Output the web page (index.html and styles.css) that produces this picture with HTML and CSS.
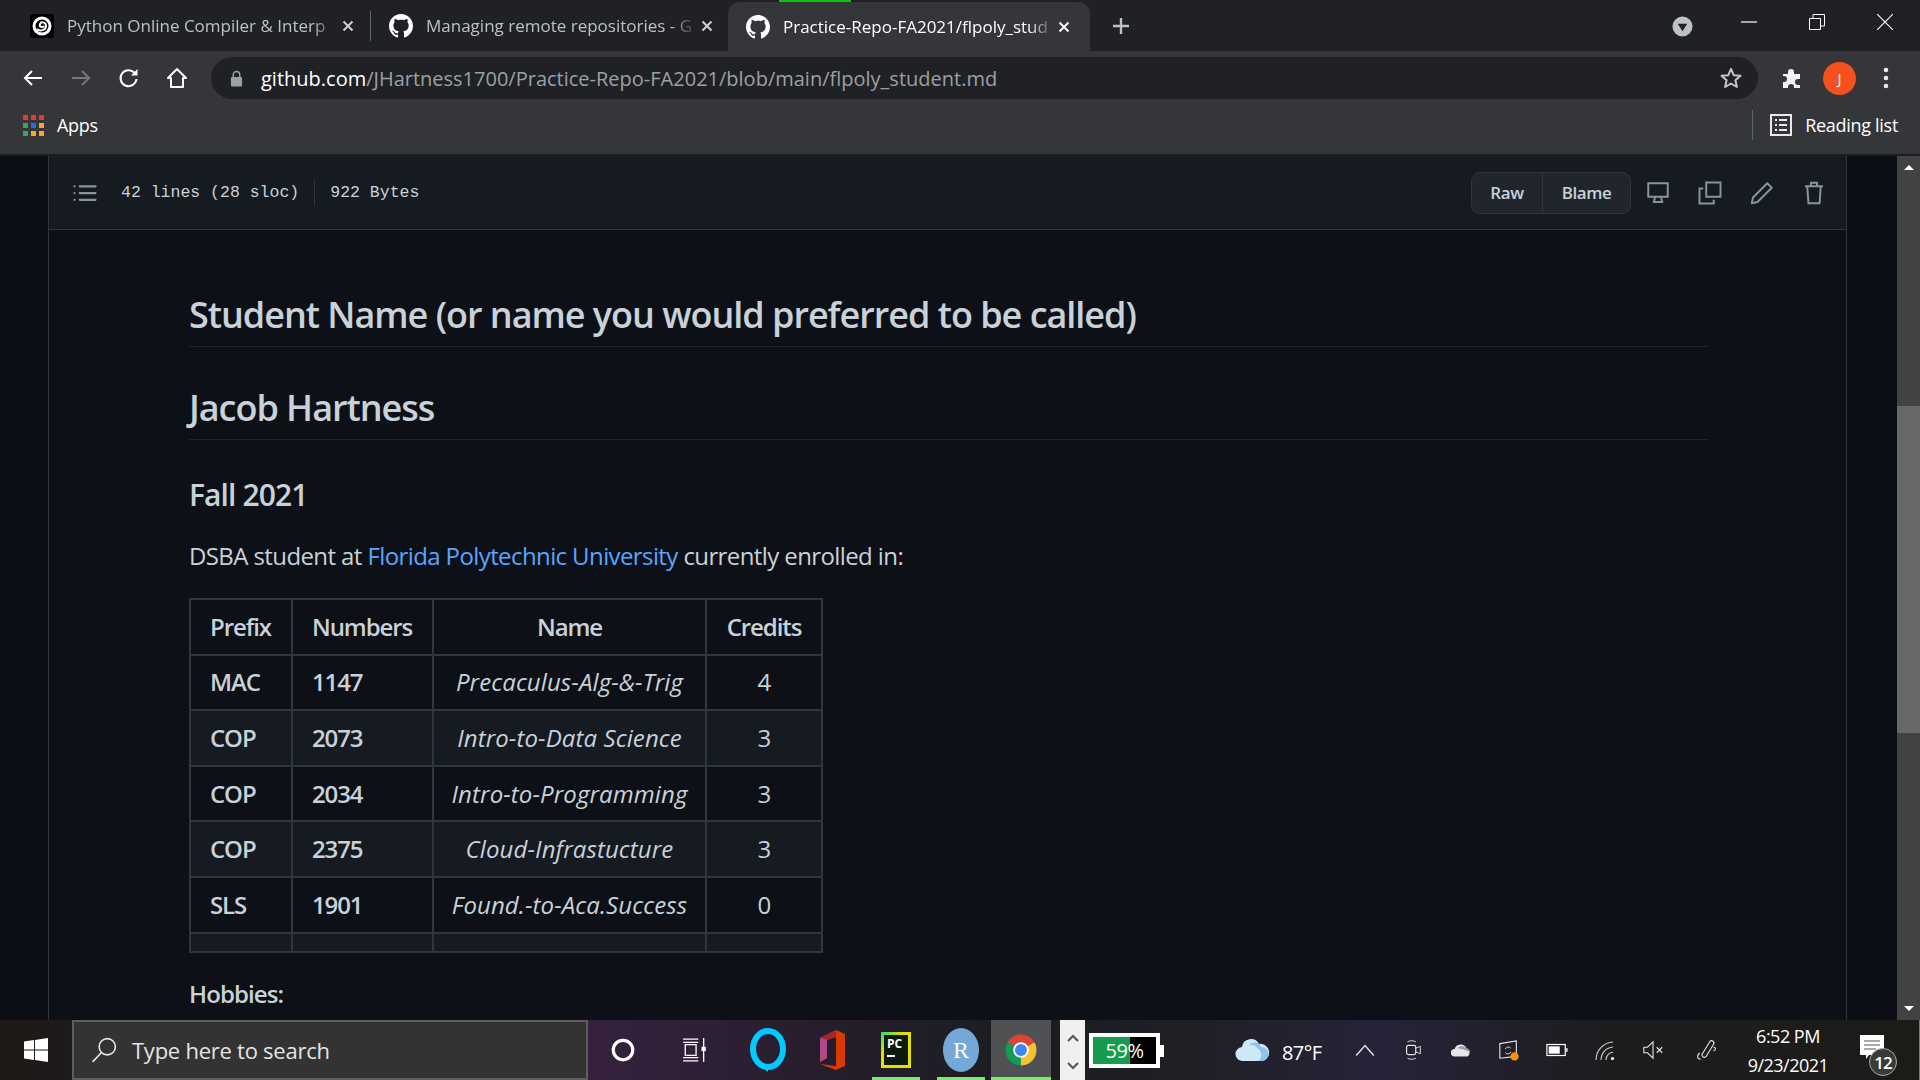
FILE: index.html
```html
<!DOCTYPE html>
<html lang="en">
<head>
<meta charset="UTF-8" />
<title>Practice-Repo-FA2021/flpoly_student.md</title>
<link rel="stylesheet" href="styles.css">
</head>
<body>
<svg class="defs">
    <symbol id="gh" viewBox="0 0 16 16"><path fill="#fff" d="M8 0C3.58 0 0 3.58 0 8c0 3.54 2.29 6.53 5.47 7.59.4.07.55-.17.55-.38 0-.19-.01-.82-.01-1.49-2.01.37-2.53-.49-2.69-.94-.09-.23-.48-.94-.82-1.13-.28-.15-.68-.52-.01-.53.63-.01 1.08.58 1.23.82.72 1.21 1.87.87 2.33.66.07-.52.28-.87.51-1.07-1.78-.2-3.64-.89-3.64-3.95 0-.87.31-1.59.82-2.15-.08-.2-.36-1.02.08-2.12 0 0 .67-.21 2.2.82.64-.18 1.32-.27 2-.27.68 0 1.36.09 2 .27 1.53-1.04 2.2-.82 2.2-.82.44 1.1.16 1.92.08 2.12.51.56.82 1.27.82 2.15 0 3.07-1.87 3.75-3.65 3.95.29.25.54.73.54 1.48 0 1.07-.01 1.93-.01 2.2 0 .21.15.46.55.38A8.013 8.013 0 0016 8c0-4.42-3.58-8-8-8z"/></symbol>
    <symbol id="x" viewBox="0 0 12 12"><path d="M1.5 1.5l9 9M10.5 1.5l-9 9" stroke="currentColor" stroke-width="2" fill="none"/></symbol>
</svg>

<!-- tab strip -->
<div class="tabstrip">
    <div class="loadbar"></div>
    <div class="tab tab-first">
        <svg class="favicon" viewBox="0 0 24 24"><rect width="24" height="24" rx="3" fill="#000"/><circle cx="12" cy="12" r="8" fill="none" stroke="#fff" stroke-width="3"/><path d="M7 15c3 3 9 1 9-3s-5-5-6-2 2 4 4 2" fill="none" stroke="#fff" stroke-width="2"/></svg>
        <span class="tab-title dim">Python Online Compiler &amp; Interp</span>
        <svg class="tab-x dim"><use href="#x"/></svg>
    </div>
    <div class="tab-sep"></div>
    <div class="tab tab-second">
        <svg class="favicon"><use href="#gh"/></svg>
        <span class="tab-title dim">Managing remote repositories - G</span>
        <svg class="tab-x dim"><use href="#x"/></svg>
    </div>
    <div class="tab tab-active">
        <svg class="favicon"><use href="#gh"/></svg>
        <span class="tab-title">Practice-Repo-FA2021/flpoly_stud</span>
        <svg class="tab-x"><use href="#x"/></svg>
    </div>
    <svg class="newtab" viewBox="0 0 18 18"><path d="M9 1v16M1 9h16" stroke="#bdc1c6" stroke-width="2.4"/></svg>
    <svg class="tabsearch" viewBox="0 0 22 22"><circle cx="11" cy="11" r="10.5" fill="#bdc1c6"/><path d="M6 8h10l-5 8z" fill="#202124"/></svg>
    <div class="winctrl">
        <svg viewBox="0 0 16 16"><path d="M0 8h16" stroke="#fff" stroke-width="1.2"/></svg>
        <svg viewBox="0 0 16 16"><path d="M.5 4.5h11v11H.5zM4 4V.5h11.5V12H12" stroke="#fff" fill="none"/></svg>
        <svg viewBox="0 0 16 16"><path d="M0 0l16 16M16 0L0 16" stroke="#fff" stroke-width="1.1"/></svg>
    </div>
</div>

<!-- address bar -->
<div class="toolbar">
    <svg class="nav" viewBox="0 0 24 24"><path d="M21 12H4M11 5l-7 7 7 7" fill="none" stroke="#fff" stroke-width="2"/></svg>
    <svg class="nav" viewBox="0 0 24 24"><path d="M3 12h17M13 5l7 7-7 7" fill="none" stroke="#75777a" stroke-width="2"/></svg>
    <svg class="nav" viewBox="0 0 24 24"><path d="M19.5 13a8 8 0 1 1-2.3-6.5" fill="none" stroke="#fff" stroke-width="2"/><path d="M20.5 3v6.5H14z" fill="#fff"/></svg>
    <svg class="nav" viewBox="0 0 24 24"><path d="M12 3L3 12h3v9h12v-9h3z" fill="none" stroke="#fff" stroke-width="2" stroke-linejoin="round"/></svg>
    <div class="omnibox">
        <svg class="lock" viewBox="0 0 14 18"><path d="M3.5 8V5a3.5 3.5 0 0 1 7 0v3" fill="none" stroke="#9aa0a6" stroke-width="1.6"/><rect x="1" y="7.5" width="12" height="10" rx="1.2" fill="#9aa0a6"/></svg>
        <span class="url"><b>github.com</b>/JHartness1700/Practice-Repo-FA2021/blob/main/flpoly_student.md</span>
        <svg class="star" viewBox="0 0 24 24"><path d="M12 3l2.7 6.2 6.8.6-5.1 4.5 1.5 6.7L12 17.5 6.100 21l1.500-6.700L2.500 9.800l6.800-.6z" fill="none" stroke="#c4c7c5" stroke-width="2" stroke-linejoin="round"/></svg>
    </div>
    <svg class="puzzle" viewBox="0 0 24 24"><path fill="#f1f3f4" d="M3 8h5V6a3 3 0 0 1 6 0v2h6v5h-2a3 3 0 0 0 0 6h2v3h-6v-1a3 3 0 0 0-6 0v1H3v-6h1a3 3 0 0 0 0-6H3z"/></svg>
    <div class="avatar">J</div>
    <svg class="dots" viewBox="0 0 6 24"><circle cx="3" cy="4" r="2.300" fill="#e8eaed"/><circle cx="3" cy="12" r="2.300" fill="#e8eaed"/><circle cx="3" cy="20" r="2.300" fill="#e8eaed"/></svg>
</div>

<!-- bookmarks -->
<div class="bookmarks">
    <div class="apps-grid">
        <i class="r"></i><i class="r"></i><i class="r"></i>
        <i class="g"></i><i class="b"></i><i class="y"></i>
        <i class="g"></i><i class="y"></i><i class="y"></i>
    </div>
    <span class="bm-label">Apps</span>
    <div class="bm-sep"></div>
    <svg class="readlist" viewBox="0 0 22 22"><rect x="1" y="1" width="20" height="20" fill="none" stroke="#e8eaed" stroke-width="2"/><path d="M5 6h2M9 6h8M5 11h2M9 11h8M5 16h2M9 16h8" stroke="#e8eaed" stroke-width="2"/></svg>
    <span class="bm-label">Reading list</span>
</div>

<div class="viewport">
    <div class="page">
        <div class="filebox">
            <div class="filehead">
                <svg class="octi toc" viewBox="0 0 16 16"><path d="M1 3.500h.01M1 8h.01M1 12.500h.01M4.500 3.500H15M4.500 8H15M4.500 12.500H15" stroke="#8b949e" stroke-width="1.500" stroke-linecap="round"/></svg>
                <span class="meta">42 lines (28 sloc)</span>
                <span class="meta meta-last">922 Bytes</span>
                <div class="btngroup">
                    <span class="btn">Raw</span>
                    <span class="btn">Blame</span>
                </div>
                <svg class="octi" viewBox="0 0 16 16"><path d="M1.500 1.500h13v9h-13zM6 10.500l-.6 3M10 10.500l.6 3M4.500 14h7" fill="none" stroke="#8b949e" stroke-width="1.300"/></svg>
                <svg class="octi" viewBox="0 0 16 16"><path d="M5.500 1h9.500v9.500H5.500zM3.500 5H1v10h9.500v-2.500" fill="none" stroke="#8b949e" stroke-width="1.300"/></svg>
                <svg class="octi" viewBox="0 0 16 16"><path d="M11.500 1.500l3 3L5 14l-3.800.8L2 11z" fill="none" stroke="#8b949e" stroke-width="1.300" stroke-linejoin="round"/></svg>
                <svg class="octi" viewBox="0 0 16 16"><path d="M2 3.500h12M6 3.500V1.200h4v2.300M3.500 3.500l.8 11.300h7.400l.8-11.300" fill="none" stroke="#8b949e" stroke-width="1.300"/></svg>
            </div>
            <div class="markdown">
                <h2>Student Name (or name you would preferred to be called)</h2>
                <h2>Jacob Hartness</h2>
                <h3>Fall 2021</h3>
                <p>DSBA student at <a href="#">Florida Polytechnic University</a> currently enrolled in:</p>
                <table>
                    <thead>
                        <tr><th>Prefix</th><th>Numbers</th><th class="c">Name</th><th class="c">Credits</th></tr>
                    </thead>
                    <tbody>
                        <tr><td><b>MAC</b></td><td><b>1147</b></td><td class="c"><em>Precaculus-Alg-&amp;-Trig</em></td><td class="c">4</td></tr>
                        <tr><td><b>COP</b></td><td><b>2073</b></td><td class="c"><em>Intro-to-Data Science</em></td><td class="c">3</td></tr>
                        <tr><td><b>COP</b></td><td><b>2034</b></td><td class="c"><em>Intro-to-Programming</em></td><td class="c">3</td></tr>
                        <tr><td><b>COP</b></td><td><b>2375</b></td><td class="c"><em>Cloud-Infrastucture</em></td><td class="c">3</td></tr>
                        <tr><td><b>SLS</b></td><td><b>1901</b></td><td class="c"><em>Found.-to-Aca.Success</em></td><td class="c">0</td></tr>
                        <tr class="empty"><td></td><td></td><td></td><td></td></tr>
                    </tbody>
                </table>
                <p class="hobbies"><b>Hobbies:</b></p>
            </div>
        </div>
    </div>
    <div class="scrollbar">
        <div class="sb-arrow"><i class="up"></i></div>
        <div class="sb-track"><div class="sb-thumb"></div></div>
        <div class="sb-arrow"><i class="down"></i></div>
    </div>
</div>

<!-- windows taskbar -->
<div class="taskbar">
    <svg class="winlogo" viewBox="0 0 24 24"><path fill="#fff" d="M0 3.500l10-1.400v9.300H0zM11 2L24 0v11.400H11zM0 12.600h10v9.300L0 20.500zM11 12.600h13V24l-13-2z"/></svg>
    <div class="searchbox">
        <svg class="search-icon" viewBox="0 0 24 24"><circle cx="15" cy="9" r="7.500" fill="none" stroke="#e6e6e6" stroke-width="1.500"/><path d="M9.500 14.500L1.500 23" stroke="#e6e6e6" stroke-width="1.500"/></svg>
        <span>Type here to search</span>
    </div>
    <div class="tb-slot cortana"><svg viewBox="0 0 24 24"><circle cx="12" cy="12" r="9" fill="none" stroke="#fff" stroke-width="3"/></svg></div>
    <div class="tb-slot taskview"><svg viewBox="0 0 24 24"><path d="M1 2h14M1 5h14M3 7h10v10H3zM1 19h14M1 22h14M20 1v22" fill="none" stroke="#fff" stroke-width="1.200"/><rect x="18" y="9" width="4" height="4" fill="#fff"/></svg></div>
    <div class="tb-slot slot-alexa"><svg class="alexa" viewBox="0 0 36 44"><ellipse cx="18" cy="21" rx="15" ry="18" fill="none" stroke="#00caff" stroke-width="6"/><path d="M9 37l9 7v-7z" fill="#00caff"/></svg></div>
    <div class="tb-slot"><svg class="office" viewBox="0 0 28 42"><path d="M2 9L18 1l9 4v32l-9 4-16-6 16 2V8l-9 3v18l-7 4z" fill="#d83b01"/><path d="M2 9L18 1v7l-9 3v18l-7 4z" fill="#a4262c"/><path d="M2 9l7 2v18l-7 4z" fill="#b04a8a"/></svg></div>
    <div class="tb-slot running slot-pc"><div class="pycharm"><div class="pc-in"><span>PC</span><i></i></div></div></div>
    <div class="tb-slot running"><div class="rlogo">R</div></div>
    <div class="tb-slot running active">
        <svg class="chrome" viewBox="0 0 48 48"><path d="M24 24L5 13A22 22 0 0 1 43 13z" fill="#db4437"/><path d="M24 24L43 13A22 22 0 0 1 24 46z" fill="#fbc02d"/><path d="M24 24L24 46A22 22 0 0 1 5 13z" fill="#0f9d58"/><circle cx="24" cy="24" r="11" fill="#fff"/><circle cx="24" cy="24" r="8.500" fill="#4285f4"/></svg>
    </div>
    <div class="scrollstrip">
        <svg viewBox="0 0 12 8"><path d="M1 7l5-5 5 5" fill="none" stroke="#555" stroke-width="2"/></svg>
        <svg viewBox="0 0 12 8"><path d="M1 1l5 5 5-5" fill="none" stroke="#555" stroke-width="2"/></svg>
    </div>
    <div class="batterywidget"><div class="bw-fill"></div><span>59%</span></div>
    <svg class="weather" viewBox="0 0 34 24"><path d="M8 23a7 7 0 0 1-1-14 9 9 0 0 1 17-3 7 7 0 0 1 3 17z" fill="#cfe8f8"/><path d="M14 7a7 7 0 0 1 12 2 6 6 0 0 1 1 14h-4a7 7 0 0 0 0-12 9 9 0 0 0-9-4z" fill="#8fc4ea"/></svg>
    <span class="temp">87°F</span>
    <svg class="tray caret" viewBox="0 0 20 20"><path d="M2 15l8-9 8 9" fill="none" stroke="#e6e6e6" stroke-width="1.300"/></svg>
    <svg class="tray" viewBox="0 0 20 24"><rect x="3" y="7" width="10" height="10" rx="2" fill="none" stroke="#e6e6e6" stroke-width="1.300"/><path d="M13 10l5-2v8l-5-2M4 3c3-1.500 6-1.500 9 0M4 21c3 1.500 6 1.500 9 0" fill="none" stroke="#e6e6e6"/></svg>
    <svg class="tray" viewBox="0 0 24 16"><path d="M5 15a4 4 0 0 1 0-8 7 7 0 0 1 13-1 5 5 0 0 1 1 9z" fill="#e6e6e6"/><path d="M8 6a7 7 0 0 1 10 0 5 5 0 0 1 4 4l-9-3z" fill="#9a9a9a"/></svg>
    <svg class="tray" viewBox="0 0 24 24"><path d="M2 5l18-3v17l-18 2z" fill="none" stroke="#e6e6e6" stroke-width="1.200"/><path d="M8 11a3.500 3.500 0 0 1 6-1M14 14a3.500 3.500 0 0 1-6 1" fill="none" stroke="#e6e6e6"/><circle cx="18" cy="19" r="4.500" fill="#f59300"/></svg>
    <svg class="tray" viewBox="0 0 24 16"><rect x="1" y="2" width="20" height="12" fill="none" stroke="#fff" stroke-width="1.300"/><rect x="3" y="4" width="12" height="8" fill="#fff"/><rect x="22" y="6" width="1.500" height="4" fill="#fff"/></svg>
    <svg class="tray" viewBox="0 0 22 22"><path d="M2 21A18 18 0 0 1 19 3M7 21A13 13 0 0 1 19 8M12 21a8 8 0 0 1 7-8" fill="none" stroke="#ccc" stroke-width="1.200"/><circle cx="18.500" cy="19.500" r="1.600" fill="#fff"/></svg>
    <svg class="tray" viewBox="0 0 24 22"><path d="M2 8h4l6-6v18l-6-6H2z" fill="none" stroke="#e6e6e6" stroke-width="1.200"/><path d="M16 8l6 6M22 8l-6 6" stroke="#e6e6e6" stroke-width="1.200"/></svg>
    <svg class="tray pen" viewBox="0 0 24 24"><path d="M15 3l-8 13a2.500 2.500 0 0 0 4 3l8-13a2 2 0 0 0-4-3zM4 15c-3 3-3 7 1 7M19 9c3 0 3 3 0 4" fill="none" stroke="#e6e6e6" stroke-width="1.200"/></svg>
    <div class="clock"><span>6:52 PM</span><span>9/23/2021</span></div>
    <div class="notif">
        <svg viewBox="0 0 24 24"><path d="M0 0h24v20H9l-3 4v-4H0z" fill="#fff"/><path d="M4 6h16M4 10h16M4 14h12" stroke="#555" stroke-width="1.200"/></svg>
        <span class="notif-count">12</span>
    </div>
    <div class="desktop-edge"></div>
</div>
</body>
</html>
```

FILE: styles.css
```css
* {
    box-sizing: border-box;
}

html, body {
    height: 100%;
}

body {
    margin: 0;
    height: 1080px;
    overflow: hidden;
    display: flex;
    flex-direction: column;
    background: #0d1117;
    font-family: "Open Sans", "Noto Sans", sans-serif;
    color: #c9d1d9;
}

.defs {
    position: absolute;
    width: 0;
    height: 0;
}

/* tab strip */
.tabstrip {
    position: relative;
    height: 51px;
    flex: none;
    display: flex;
    align-items: center;
    background: #202124;
    color: #fff;
}

.loadbar {
    position: absolute;
    top: 0;
    left: 779px;
    width: 72px;
    height: 2px;
    background: #0fc00f;
    z-index: 1;
}

.tab {
    height: 51px;
    display: flex;
    align-items: center;
    flex: none;
}

.tab-first {
    width: 370px;
    padding-left: 30px;
}

.tab-sep {
    width: 1px;
    height: 30px;
    background: #5f6368;
    flex: none;
}

.tab-second {
    width: 357px;
    padding-left: 18px;
}

.tab-active {
    width: 362px;
    padding-left: 18px;
    margin-top: 2px;
    height: 49px;
    background: #35363a;
    border-radius: 12px 12px 0 0;
}

.favicon {
    width: 24px;
    height: 24px;
    flex: none;
    margin-right: 13px;
}

.tab-title {
    flex: none;
    width: 272px;
    overflow: hidden;
    white-space: nowrap;
    font-size: 17px;
    letter-spacing: 0;
    color: #fff;
    -webkit-mask-image: linear-gradient(to right, #000 90%, transparent);
    mask-image: linear-gradient(to right, #000 90%, transparent);
}

.tab-title.dim {
    color: #bdc1c6;
}

.tab-x {
    width: 12px;
    height: 12px;
    margin-left: 3px;
    color: #fff;
    flex: none;
}

.tab-x.dim {
    color: #cfd1d4;
}

.newtab {
    width: 18px;
    height: 18px;
    margin-left: 22px;
    flex: none;
}

.tabsearch {
    width: 21px;
    height: 21px;
    margin-left: 542px;
    margin-top: 1px;
    flex: none;
}

.winctrl {
    display: flex;
    margin-left: 48px;
    margin-top: -8px;
    gap: 52px;
}

.winctrl svg {
    width: 16px;
    height: 16px;
    display: block;
}

/* toolbar */
.toolbar {
    height: 51px;
    padding-top: 3px;
    flex: none;
    display: flex;
    align-items: center;
    padding-left: 21px;
    background: #35363a;
}

.nav {
    width: 24px;
    height: 24px;
    margin-right: 24px;
    flex: none;
}

.omnibox {
    width: 1547px;
    height: 42px;
    margin-left: -2px;
    padding: 0 15px 0 19px;
    display: flex;
    align-items: center;
    border-radius: 21px;
    background: #202124;
    flex: none;
}

.lock {
    width: 13px;
    height: 17px;
    margin-right: 18px;
    flex: none;
}

.url {
    flex: 1;
    font-size: 20px;
    color: #9aa0a6;
    white-space: nowrap;
}

.url b {
    font-weight: 400;
    color: #fff;
}

.star {
    width: 24px;
    height: 24px;
    flex: none;
}

.puzzle {
    width: 24px;
    height: 24px;
    margin-left: 22px;
    flex: none;
}

.avatar {
    width: 33px;
    height: 33px;
    margin-left: 19px;
    display: flex;
    align-items: center;
    justify-content: center;
    border-radius: 50%;
    background: #f4511e;
    color: #fff;
    font-size: 15px;
    flex: none;
}

.dots {
    width: 6px;
    height: 24px;
    margin-left: 27px;
    flex: none;
}

/* bookmarks bar */
.bookmarks {
    height: 54px;
    flex: none;
    display: flex;
    align-items: center;
    padding-left: 23px;
    padding-bottom: 6px;
    background: #35363a;
    border-bottom: 2px solid #1b1c1f;
    color: #fff;
    font-size: 18px;
}

.apps-grid {
    display: grid;
    grid-template-columns: repeat(3, 5px);
    grid-auto-rows: 5px;
    gap: 3px;
    margin-right: 13px;
}

.apps-grid i {
    display: block;
}

.apps-grid .r { background: #e53935; }
.apps-grid .g { background: #34a853; }
.apps-grid .b { background: #1a73e8; }
.apps-grid .y { background: #f9a825; }

.bm-label {
    letter-spacing: -0.3px;
}

.bm-sep {
    width: 1px;
    height: 30px;
    margin-left: auto;
    margin-right: 17px;
    background: #5f6368;
}

.readlist {
    width: 22px;
    height: 22px;
    margin-right: 13px;
}

.bookmarks .bm-label:last-child {
    margin-right: 22px;
}

/* page */
.viewport {
    flex: 1;
    min-height: 0;
    display: flex;
    overflow: hidden;
}

.page {
    flex: 1;
    padding-left: 48px;
    padding-right: 50px;
    background: #0b0e14;
    overflow: hidden;
}

.filebox {
    height: 100%;
    border-left: 1px solid #30363d;
    border-right: 1px solid #30363d;
    background: #0d1117;
}

.filehead {
    height: 74px;
    display: flex;
    align-items: center;
    padding-left: 24px;
    padding-right: 20px;
    background: #161b22;
    border-bottom: 1px solid #30363d;
}

.octi {
    width: 24px;
    height: 24px;
    margin-left: 28px;
    flex: none;
}

.toc {
    margin-left: 0;
    margin-right: 24px;
}

.meta {
    font-family: "Liberation Mono", monospace;
    font-size: 16.5px;
}

.meta:not(.meta-last) {
    padding-right: 15px;
    margin-right: 15px;
    border-right: 1px solid #30363d;
    line-height: 27px;
}

.btngroup {
    margin-left: auto;
    margin-right: -13px;
    display: flex;
    height: 42px;
    border: 1px solid #30363d;
    border-radius: 9px;
    background: #21262d;
    font-size: 17px;
    font-weight: 600;
}

.btn {
    display: flex;
    align-items: center;
    padding: 0 18.5px;
    letter-spacing: -0.4px;
}

.btn + .btn {
    border-left: 1px solid #30363d;
}

.markdown {
    padding: 63px 138px 0 140px;
    font-size: 24px;
    line-height: 36px;
    letter-spacing: -0.6px;
}

.markdown h2 {
    margin: 0 0 39px;
    height: 54px;
    font-size: 36px;
    font-weight: 600;
    line-height: 44px;
    border-bottom: 1px solid #21262d;
    letter-spacing: -1.03px;
}

.markdown h3 {
    margin: -3px 0 24px;
    font-size: 30px;
    font-weight: 600;
    line-height: 38px;
    letter-spacing: -0.9px;
}

.markdown p {
    margin: 0 0 24px;
}

.markdown a {
    color: #58a6ff;
    text-decoration: none;
}

.markdown b {
    font-weight: 600;
    letter-spacing: -1.1px;
}

.markdown .hobbies b {
    letter-spacing: -0.9px;
}

.markdown em {
    letter-spacing: 0.1px;
}

.markdown table {
    width: 634px;
    margin-bottom: 23px;
    border-collapse: collapse;
    table-layout: fixed;
}

.markdown th:nth-child(1) { width: 102px; }
.markdown th:nth-child(2) { width: 141px; }
.markdown th:nth-child(3) { width: 273px; }

.markdown th,
.markdown td {
    height: 55.6px;
    padding: 0 19px;
    border: 2px solid #30363d;
    text-align: left;
    font-weight: 400;
}

.markdown th {
    font-weight: 600;
    letter-spacing: -1.1px;
}

.markdown .c {
    text-align: center;
    padding: 0;
}

.markdown tbody tr:nth-child(even) {
    background: #161b22;
}

.markdown tr.empty td {
    height: 19px;
}

/* scrollbar */
.scrollbar {
    width: 23px;
    flex: none;
    display: flex;
    flex-direction: column;
    background: #424242;
}

.sb-arrow {
    height: 23px;
    flex: none;
    display: flex;
    align-items: center;
    justify-content: center;
}

.sb-arrow i {
    width: 0;
    height: 0;
    border-left: 5px solid transparent;
    border-right: 5px solid transparent;
}

.sb-arrow .up { border-bottom: 5px solid #fff; }
.sb-arrow .down { border-top: 5px solid #fff; }

.sb-track {
    flex: 1;
    padding-top: 227px;
}

.sb-thumb {
    height: 327px;
    background: #686868;
}

/* taskbar */
.taskbar {
    height: 60px;
    flex: none;
    display: flex;
    align-items: center;
    color: #fff;
    background: linear-gradient(to right, #1f1a18 0, #1d1a1a 70px, #35213d 600px, #241d2a 850px, #1c1d20 1050px, #1f2026 1200px, #282239 1380px, #1e1c1f 1600px, #1d1b18 1920px);
}

.winlogo {
    width: 24px;
    height: 24px;
    margin-left: 24px;
    margin-right: 24px;
    flex: none;
}

.searchbox {
    width: 516px;
    height: 60px;
    display: flex;
    align-items: center;
    padding-left: 17px;
    background: #333333;
    border: 2px solid #5d5d5d;
    color: #e4e4e4;
    font-size: 22px;
    letter-spacing: -0.25px;
    flex: none;
}

.search-icon {
    width: 26px;
    height: 26px;
    margin-right: 15px;
}

.tb-slot {
    position: relative;
    width: 60px;
    height: 60px;
    display: flex;
    align-items: center;
    justify-content: center;
    flex: none;
    margin-right: 4px;
}

.tb-slot > svg {
    width: 26px;
    height: 26px;
}

.cortana {
    margin-left: 5px;
    margin-right: 12px;
}

.taskview {
    margin-right: 13px;
}

.slot-alexa {
    margin-right: 4px;
}

.slot-pc {
    margin-right: 5px;
}

.tb-slot > .alexa {
    width: 36px;
    height: 44px;
}

.tb-slot > .office {
    width: 28px;
    height: 42px;
}

.tb-slot.running::after {
    content: "";
    position: absolute;
    left: 6px;
    right: 6px;
    bottom: 0;
    height: 3px;
    background: #76ee6b;
}

.tb-slot.active {
    margin-left: -4px;
    margin-right: 0;
    background: #505153;
}

.tb-slot.active::after {
    left: 0;
    right: 0;
}

.pycharm {
    width: 30px;
    height: 36px;
    padding: 3px;
    background: linear-gradient(135deg, #21d789 0, #e3e000 35%);
}

.pc-in {
    height: 100%;
    padding: 2px 3px;
    background: #0d1a0d;
    font-size: 12px;
    font-weight: 700;
    line-height: 13px;
}

.pc-in span {
    display: block;
}

.pc-in i {
    display: block;
    margin-top: 5px;
    width: 8px;
    height: 2px;
    background: #fff;
}

.rlogo {
    width: 36px;
    height: 44px;
    display: flex;
    align-items: center;
    justify-content: center;
    border-radius: 50%;
    background: #75a8d8;
    font-family: "Liberation Serif", serif;
    font-size: 24px;
}

.tb-slot > .chrome {
    width: 34px;
    height: 42px;
}

.scrollstrip {
    width: 25px;
    height: 60px;
    margin-left: 9px;
    display: flex;
    flex-direction: column;
    align-items: center;
    justify-content: space-between;
    padding: 14px 0 10px;
    background: #f0f0f0;
    flex: none;
}

.scrollstrip svg {
    width: 12px;
    height: 8px;
}

.batterywidget {
    position: relative;
    width: 71px;
    height: 35px;
    margin-left: 4px;
    display: flex;
    align-items: center;
    justify-content: center;
    background: #000;
    border: 4px solid #fff;
    font-size: 20px;
    letter-spacing: -0.5px;
    flex: none;
}

.batterywidget::after {
    content: "";
    position: absolute;
    right: -8px;
    top: 8px;
    width: 4px;
    height: 12px;
    background: #fff;
}

.bw-fill {
    position: absolute;
    left: 0;
    top: 0;
    bottom: 0;
    width: 59%;
    background: #169c4c;
}

.batterywidget span {
    position: relative;
}

.weather {
    width: 34px;
    height: 26px;
    margin-left: 75px;
    flex: none;
}

.temp {
    width: 48px;
    margin-left: 13px;
    font-size: 20px;
    letter-spacing: -0.6px;
    margin-top: 4px;
    flex: none;
}

.tray {
    width: 22px;
    height: 22px;
    margin-left: 26px;
    flex: none;
}

.caret {
    margin-left: 24px;
}

.pen {
    margin-left: 32px;
}

.clock {
    width: 100px;
    margin-left: 20px;
    display: flex;
    flex-direction: column;
    align-items: center;
    gap: 9px;
    font-size: 18px;
    line-height: 20px;
    letter-spacing: -0.5px;
    flex: none;
}

.notif {
    position: relative;
    width: 24px;
    height: 24px;
    margin-left: 22px;
    margin-top: -6px;
    flex: none;
}

.notif svg {
    width: 24px;
    height: 24px;
    display: block;
}

.notif-count {
    position: absolute;
    left: 9px;
    top: 13px;
    width: 28px;
    height: 28px;
    display: flex;
    align-items: center;
    justify-content: center;
    border-radius: 50%;
    border: 1px solid #aaa;
    background: #3a3a3a;
    font-size: 17px;
    font-weight: 600;
    letter-spacing: -1px;
}

.desktop-edge {
    margin-left: auto;
    width: 1px;
    height: 60px;
    background: #777;
}
```
